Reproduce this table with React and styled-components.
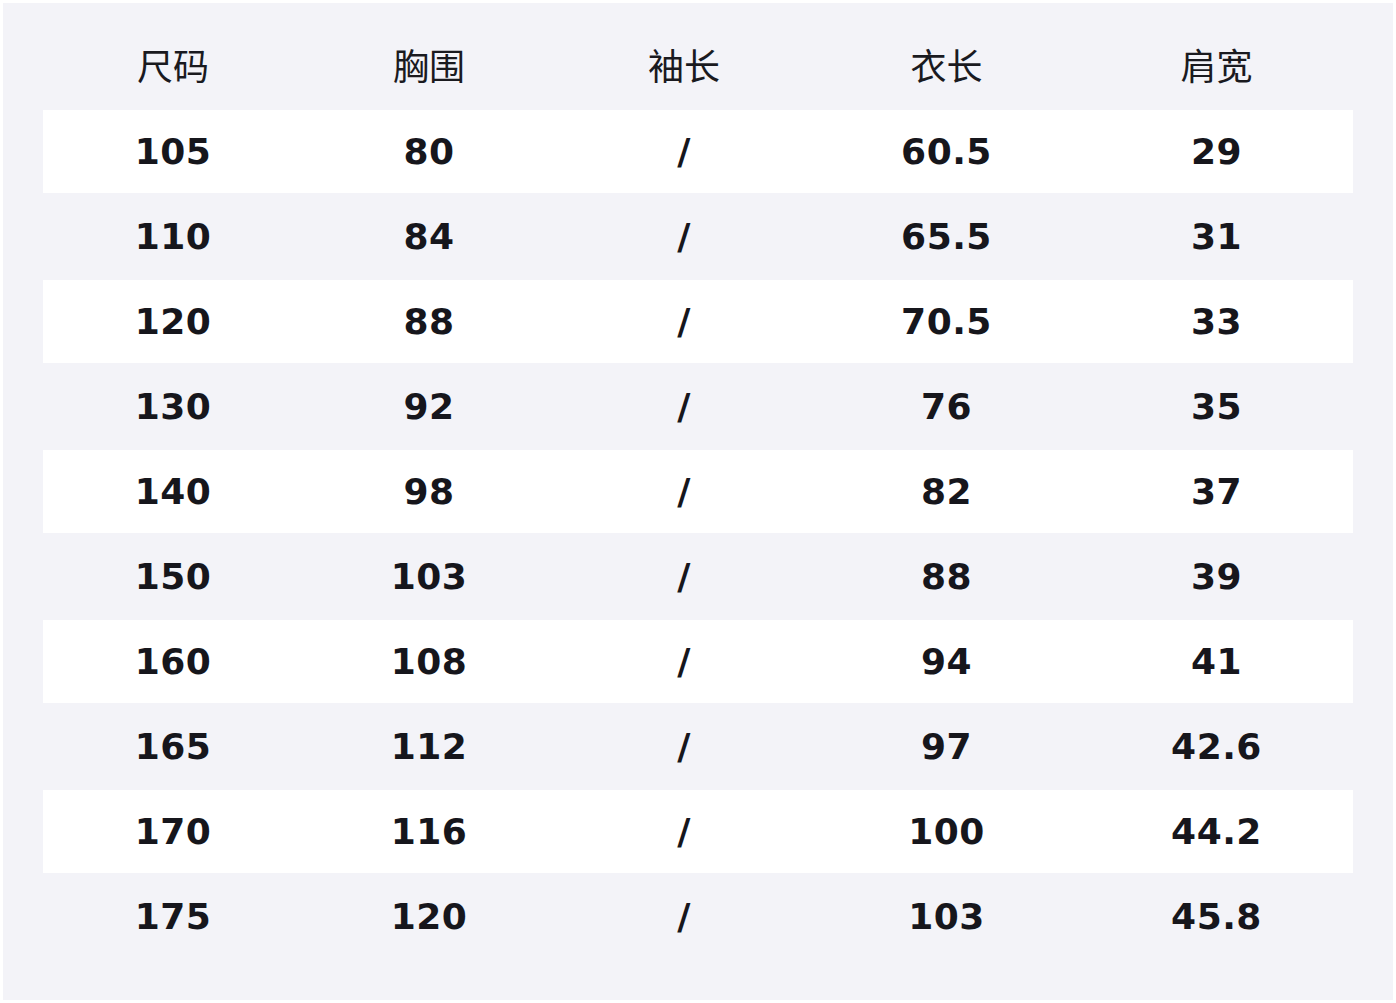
import styled, {createGlobalStyle} from 'styled-components';

const GlobalStyle = createGlobalStyle`
  html, body {
    margin: 0;
    padding: 0;
    background: #ffffff;
  }
`;

const Panel = styled.div`
  margin: 3px;
  width: 1390px;
  height: 997px;
  box-sizing: border-box;
  background: #f3f3f8;
  padding: 22px 40px 0 40px;
  font-family: "DejaVu Sans", "Noto Sans CJK SC", sans-serif;
  color: #16161c;
`;

const Row = styled.div`
  display: grid;
  grid-template-columns: 260px 252px 258px 267px 273px;
  height: 83px;
  margin-bottom: 2px;
  align-items: center;
  background: ${props => (props.$white ? '#ffffff' : 'transparent')};
`;

const HeadCell = styled.div`
  text-align: center;
  font-family: "Noto Sans CJK SC", sans-serif;
  font-size: 36px;
  font-weight: 400;
  color: #1a1a1f;
  margin-bottom: 6px;
`;

const Cell = styled.div`
  text-align: center;
  font-family: "DejaVu Sans", sans-serif;
  font-size: 36px;
  font-weight: 700;
  letter-spacing: 0.5px;
`;

const headers = ['尺码', '胸围', '袖长', '衣长', '肩宽'];

const sizes = [
  ['105', '80', '/', '60.5', '29'],
  ['110', '84', '/', '65.5', '31'],
  ['120', '88', '/', '70.5', '33'],
  ['130', '92', '/', '76', '35'],
  ['140', '98', '/', '82', '37'],
  ['150', '103', '/', '88', '39'],
  ['160', '108', '/', '94', '41'],
  ['165', '112', '/', '97', '42.6'],
  ['170', '116', '/', '100', '44.2'],
  ['175', '120', '/', '103', '45.8'],
];

const App = () => {
  return (
    <>
      <GlobalStyle />
      <Panel>
        <Row>
          {headers.map(h => (
            <HeadCell key={h}>{h}</HeadCell>
          ))}
        </Row>
        {sizes.map((row, i) => (
          <Row key={row[0]} $white={i % 2 === 0}>
            {row.map((v, j) => (
              <Cell key={j}>{v}</Cell>
            ))}
          </Row>
        ))}
      </Panel>
    </>
  );
};

export default App;
